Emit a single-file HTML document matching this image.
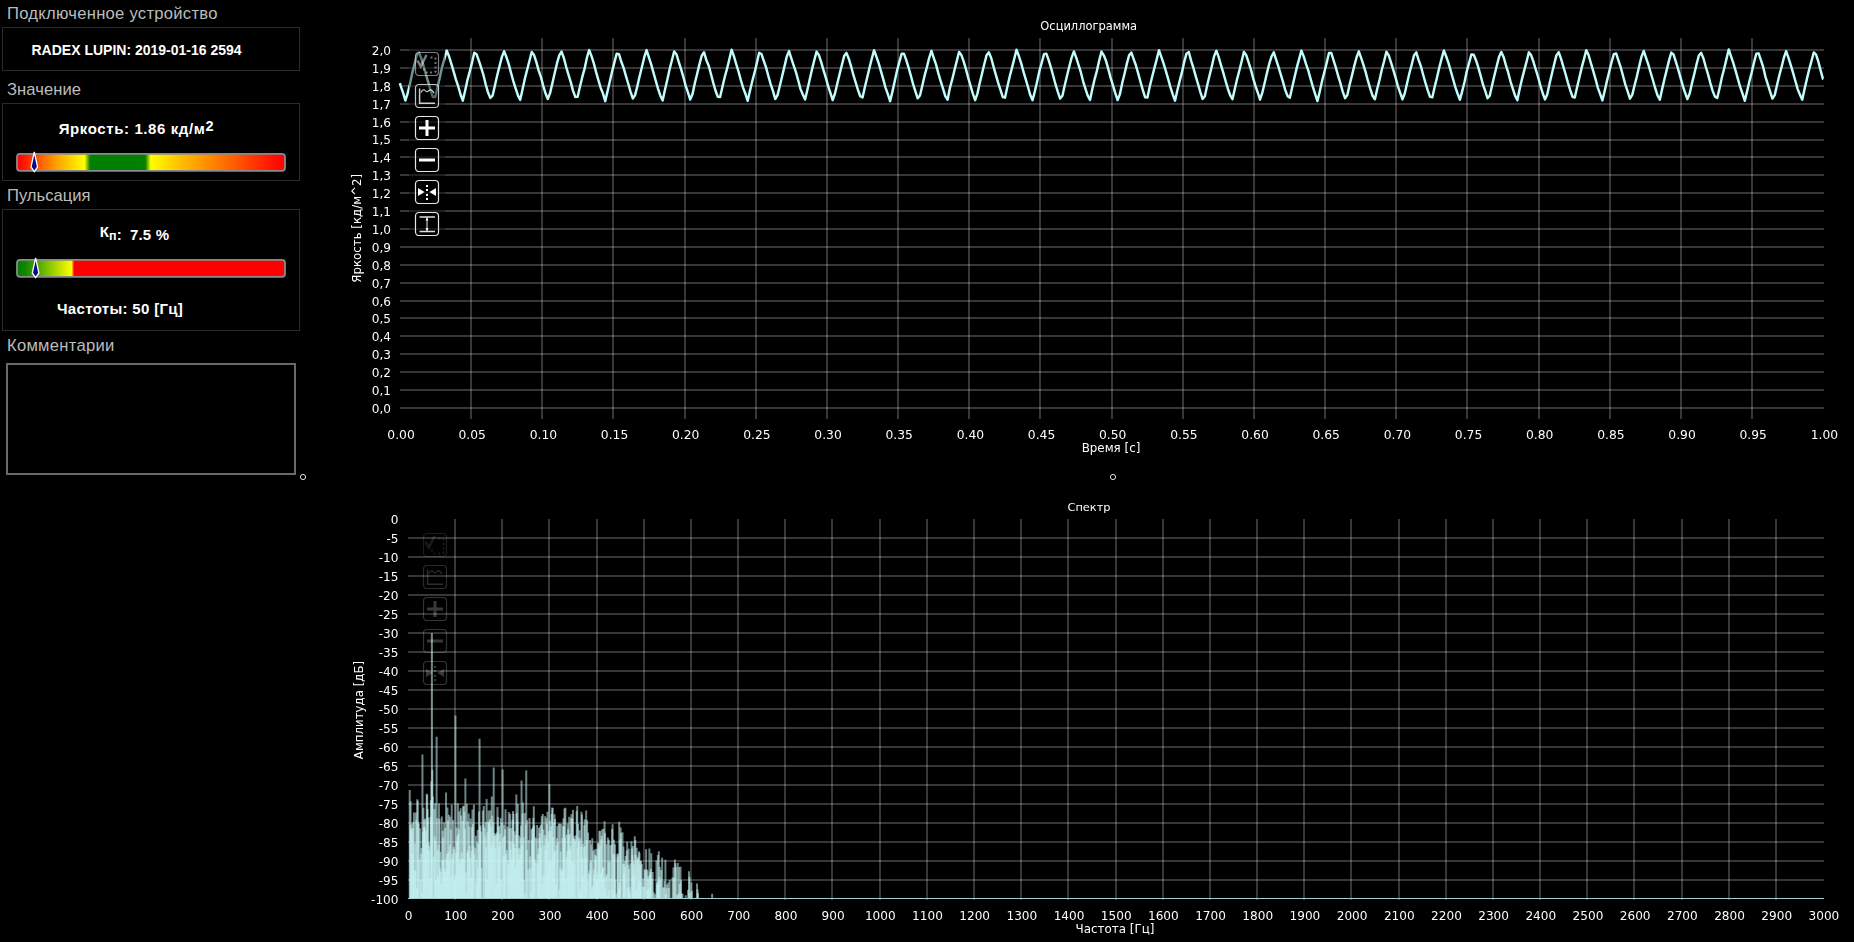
<!DOCTYPE html>
<html lang="ru"><head><meta charset="utf-8"><title>RADEX LUPIN</title><style>
html,body{margin:0;padding:0;background:#000;}
body{width:1854px;height:942px;overflow:hidden;position:relative;font-family:"Liberation Sans",sans-serif;color:#fff;}
.h{opacity:0.999;position:absolute;left:7px;color:#bcbcbc;font-size:16.6px;white-space:nowrap;line-height:20px;}
.box{position:absolute;left:2px;width:296px;border:1px solid #2b2b2b;box-sizing:content-box;}
.b{opacity:0.999;position:absolute;font-weight:bold;white-space:nowrap;color:#fff;line-height:20px;}
.ta{position:absolute;left:6px;top:363px;width:286px;height:108px;border:2px solid #6a6a6a;background:#000;}
</style></head>
<body>
<svg width="1854" height="942" viewBox="0 0 1854 942" style="position:absolute;left:0;top:0"><g fill="#fff" fill-opacity="0.215" shape-rendering="crispEdges"><rect x="400" y="407" width="1424" height="2"/><rect x="400" y="389" width="1424" height="2"/><rect x="400" y="371" width="1424" height="2"/><rect x="400" y="353" width="1424" height="2"/><rect x="400" y="335" width="1424" height="2"/><rect x="400" y="317" width="1424" height="2"/><rect x="400" y="300" width="1424" height="2"/><rect x="400" y="282" width="1424" height="2"/><rect x="400" y="264" width="1424" height="2"/><rect x="400" y="246" width="1424" height="2"/><rect x="400" y="228" width="1424" height="2"/><rect x="400" y="210" width="1424" height="2"/><rect x="400" y="192" width="1424" height="2"/><rect x="400" y="174" width="1424" height="2"/><rect x="400" y="156" width="1424" height="2"/><rect x="400" y="139" width="1424" height="2"/><rect x="400" y="121" width="1424" height="2"/><rect x="400" y="103" width="1424" height="2"/><rect x="400" y="85" width="1424" height="2"/><rect x="400" y="67" width="1424" height="2"/><rect x="400" y="49" width="1424" height="2"/><rect x="470" y="38" width="2" height="381"/><rect x="541" y="38" width="2" height="381"/><rect x="612" y="38" width="2" height="381"/><rect x="684" y="38" width="2" height="381"/><rect x="755" y="38" width="2" height="381"/><rect x="826" y="38" width="2" height="381"/><rect x="897" y="38" width="2" height="381"/><rect x="968" y="38" width="2" height="381"/><rect x="1039" y="38" width="2" height="381"/><rect x="1111" y="38" width="2" height="381"/><rect x="1182" y="38" width="2" height="381"/><rect x="1253" y="38" width="2" height="381"/><rect x="1324" y="38" width="2" height="381"/><rect x="1395" y="38" width="2" height="381"/><rect x="1466" y="38" width="2" height="381"/><rect x="1538" y="38" width="2" height="381"/><rect x="1609" y="38" width="2" height="381"/><rect x="1680" y="38" width="2" height="381"/><rect x="1751" y="38" width="2" height="381"/></g><path d="M399.83 83.09 L400.73 86.13 L403.03 92.59 L405.33 100.51 L407.62 93.36 L409.92 84.3 L412.22 73.15 L414.52 64.33 L416.81 54.94 L419.11 52.56 L421.41 58.8 L423.71 66.48 L426 74.71 L428.3 82.43 L430.6 90.64 L432.9 97.06 L435.19 97.04 L437.49 87.23 L439.79 77.64 L442.09 67.08 L444.38 59.04 L446.68 50.57 L448.98 56.18 L451.28 63.54 L453.58 71.29 L455.87 79.44 L458.17 86.23 L460.47 94.24 L462.77 100.68 L465.06 90.97 L467.36 80.43 L469.66 71.87 L471.96 62.9 L474.25 52.69 L476.55 54.27 L478.85 60.55 L481.15 67.62 L483.44 74.99 L485.74 84.5 L488.04 92.59 L490.34 97.9 L492.63 95.55 L494.93 85.44 L497.23 75.33 L499.53 66.14 L501.82 57.17 L504.12 51.24 L506.42 57.02 L508.72 64.14 L511.01 72.73 L513.31 81.1 L515.61 88.3 L517.91 95.38 L520.21 99.86 L522.5 89.46 L524.8 78.91 L527.1 69.95 L529.4 60.99 L531.69 51.95 L533.99 54.94 L536.29 61.83 L538.59 70.37 L540.88 76.87 L543.18 85.53 L545.48 93.29 L547.78 99.04 L550.07 93.15 L552.37 83.28 L554.67 73.18 L556.97 63.41 L559.26 55.3 L561.56 51.62 L563.86 58.01 L566.16 66.81 L568.45 74.61 L570.75 82.15 L573.05 90.85 L575.35 97.02 L577.65 96.78 L579.94 86.79 L582.24 77.19 L584.54 68.91 L586.84 58.01 L589.13 50.06 L591.43 55.91 L593.73 63.09 L596.03 71.88 L598.32 79.92 L600.62 87.68 L602.92 93.4 L605.22 101.13 L607.51 91.38 L609.81 81.44 L612.11 71.51 L614.41 62.4 L616.7 53.67 L619 54.18 L621.3 61.79 L623.6 67.84 L625.89 75.9 L628.19 83.52 L630.49 91.55 L632.79 98.47 L635.09 95.14 L637.38 85.96 L639.68 76.01 L641.98 66.69 L644.28 57.17 L646.57 50.12 L648.87 57.26 L651.17 64.3 L653.47 72.64 L655.76 80.77 L658.06 88.83 L660.36 95.72 L662.66 100.48 L664.95 89.79 L667.25 79.96 L669.55 69.53 L671.85 60.54 L674.14 51.54 L676.44 54.23 L678.74 61.97 L681.04 69.03 L683.33 76.78 L685.63 85.62 L687.93 92.41 L690.23 99.55 L692.52 94.01 L694.82 83.24 L697.12 74.01 L699.42 64.38 L701.72 55.75 L704.01 52.19 L706.31 59.94 L708.61 65.42 L710.91 73.77 L713.2 82.65 L715.5 90.49 L717.8 96.9 L720.1 97.05 L722.39 87.07 L724.69 77.27 L726.99 68.95 L729.29 59.57 L731.58 49.7 L733.88 56.14 L736.18 63.99 L738.48 71.51 L740.77 79.93 L743.07 87.6 L745.37 93.73 L747.67 100.85 L749.96 90.76 L752.26 81.24 L754.56 72.45 L756.86 62.92 L759.16 52.76 L761.45 53.97 L763.75 60.87 L766.05 67.36 L768.35 75.97 L770.64 84.07 L772.94 90.84 L775.24 99 L777.54 95.13 L779.83 85.75 L782.13 76.18 L784.43 66.61 L786.73 56.78 L789.02 51.12 L791.32 58.44 L793.62 65.32 L795.92 72.05 L798.21 80.43 L800.51 89.12 L802.81 94.48 L805.11 99.56 L807.4 89.8 L809.7 79.44 L812 69.48 L814.3 60.1 L816.6 51.58 L818.89 55.12 L821.19 62.09 L823.49 70.17 L825.79 77.69 L828.08 85.89 L830.38 92.78 L832.68 100.06 L834.98 93.53 L837.27 83.69 L839.57 74.2 L841.87 64.97 L844.17 56.01 L846.46 52.87 L848.76 58.72 L851.06 66.31 L853.36 74.98 L855.65 82.26 L857.95 89.95 L860.25 96.23 L862.55 97.44 L864.84 87.35 L867.14 77.77 L869.44 68.01 L871.74 58.84 L874.03 50.23 L876.33 56.37 L878.63 63.05 L880.93 71.07 L883.23 79.17 L885.52 87.57 L887.82 94.16 L890.12 101.21 L892.42 91.66 L894.71 81.25 L897.01 70.8 L899.31 62.17 L901.61 53.79 L903.9 53.7 L906.2 59.94 L908.5 67.28 L910.8 75.46 L913.09 84.16 L915.39 91.42 L917.69 98.35 L919.99 95.45 L922.28 85.66 L924.58 75.66 L926.88 67.22 L929.18 57.85 L931.47 50.86 L933.77 58.02 L936.07 64.57 L938.37 73.33 L940.67 81.07 L942.96 88.45 L945.26 96.06 L947.56 99.72 L949.86 88.12 L952.15 79.69 L954.45 70.23 L956.75 61.1 L959.05 52.03 L961.34 54.94 L963.64 61.38 L965.94 69.14 L968.24 77.84 L970.53 85.78 L972.83 93.54 L975.13 100.16 L977.43 93.63 L979.72 82.95 L982.02 73.59 L984.32 64.06 L986.62 55.11 L988.91 52.41 L991.21 58.02 L993.51 66.59 L995.81 74.66 L998.11 82.69 L1000.4 89.56 L1002.7 96.96 L1005 97.69 L1007.3 87.06 L1009.59 76.94 L1011.89 68.12 L1014.19 59.18 L1016.49 49.81 L1018.78 55.8 L1021.08 62.87 L1023.38 71.47 L1025.68 79.15 L1027.97 86.97 L1030.27 95.08 L1032.57 100.2 L1034.87 91.22 L1037.16 81.48 L1039.46 70.73 L1041.76 62.56 L1044.06 54.12 L1046.35 53.65 L1048.65 60.13 L1050.95 67.54 L1053.25 76.04 L1055.54 84.47 L1057.84 91.82 L1060.14 98.57 L1062.44 95.8 L1064.74 85.27 L1067.03 75.77 L1069.33 66.21 L1071.63 57.68 L1073.93 51.45 L1076.22 57.69 L1078.52 64.97 L1080.82 72.22 L1083.12 81.31 L1085.41 88.53 L1087.71 95.61 L1090.01 99.99 L1092.31 88.92 L1094.6 79.31 L1096.9 70.87 L1099.2 60.57 L1101.5 51.62 L1103.79 55.29 L1106.09 61.06 L1108.39 69.44 L1110.69 78.18 L1112.98 85.36 L1115.28 93.06 L1117.58 100.09 L1119.88 94.27 L1122.18 83.18 L1124.47 73.98 L1126.77 64.13 L1129.07 55.37 L1131.37 52.57 L1133.66 59.22 L1135.96 65.54 L1138.26 73.6 L1140.56 82.15 L1142.85 90.24 L1145.15 97.35 L1147.45 97.53 L1149.75 86.5 L1152.04 77.24 L1154.34 68.2 L1156.64 59.63 L1158.94 50.23 L1161.23 56.65 L1163.53 63.3 L1165.83 70.78 L1168.13 78.79 L1170.42 87.08 L1172.72 94.41 L1175.02 100.65 L1177.32 90.45 L1179.62 81.16 L1181.91 72.41 L1184.21 61.92 L1186.51 53.68 L1188.81 52.03 L1191.1 60.6 L1193.4 67.96 L1195.7 76.15 L1198 83.9 L1200.29 91.77 L1202.59 98.87 L1204.89 96.2 L1207.19 85.32 L1209.48 75.78 L1211.78 66.5 L1214.08 56.34 L1216.38 50.69 L1218.67 57.1 L1220.97 65.04 L1223.27 72.61 L1225.57 80.99 L1227.86 88.72 L1230.16 95.25 L1232.46 99.12 L1234.76 89.12 L1237.05 79.32 L1239.35 70.56 L1241.65 61.18 L1243.95 51.87 L1246.25 55.09 L1248.54 62.19 L1250.84 69.34 L1253.14 78.07 L1255.44 85.93 L1257.73 92.49 L1260.03 99.64 L1262.33 92.64 L1264.63 83.05 L1266.92 73.28 L1269.22 63.91 L1271.52 56.53 L1273.82 52.37 L1276.11 59.57 L1278.41 66.56 L1280.71 74.42 L1283.01 81.93 L1285.3 90.1 L1287.6 96.16 L1289.9 97.59 L1292.2 87.28 L1294.49 77.41 L1296.79 67.64 L1299.09 59.09 L1301.39 50.59 L1303.69 56.4 L1305.98 63.94 L1308.28 70.55 L1310.58 78.94 L1312.88 86.95 L1315.17 94.13 L1317.47 101.03 L1319.77 91.45 L1322.07 80.96 L1324.36 72.13 L1326.66 62.98 L1328.96 53.08 L1331.26 52.91 L1333.55 60.26 L1335.85 67.68 L1338.15 75.93 L1340.45 83.43 L1342.74 91.7 L1345.04 98.16 L1347.34 95.1 L1349.64 84.61 L1351.93 75.65 L1354.23 66.13 L1356.53 57.52 L1358.83 51.35 L1361.12 57.9 L1363.42 64.78 L1365.72 72.34 L1368.02 81.21 L1370.32 88.9 L1372.61 95.77 L1374.91 99.23 L1377.21 88.94 L1379.51 79.95 L1381.8 69.75 L1384.1 61.29 L1386.4 51.73 L1388.7 55.36 L1390.99 62.32 L1393.29 69.83 L1395.59 77.68 L1397.89 86.07 L1400.18 92.8 L1402.48 99.41 L1404.78 93.25 L1407.08 83.17 L1409.37 73.25 L1411.67 64.75 L1413.97 55.54 L1416.27 52.34 L1418.56 59.9 L1420.86 66.18 L1423.16 74.72 L1425.46 82.82 L1427.76 90.28 L1430.05 96.86 L1432.35 97.21 L1434.65 87.04 L1436.95 77.77 L1439.24 67.75 L1441.54 58.88 L1443.84 50.48 L1446.14 56.26 L1448.43 62.95 L1450.73 70.92 L1453.03 78.97 L1455.33 87.09 L1457.62 93.74 L1459.92 99.76 L1462.22 91.07 L1464.52 82.05 L1466.81 71 L1469.11 62.88 L1471.41 54.41 L1473.71 54.68 L1476 60.2 L1478.3 67.43 L1480.6 75.57 L1482.9 84.24 L1485.2 90.85 L1487.49 98.23 L1489.79 95.59 L1492.09 85.23 L1494.39 75.45 L1496.68 66.21 L1498.98 57.12 L1501.28 52.03 L1503.58 56.9 L1505.87 65.07 L1508.17 72.45 L1510.47 81.26 L1512.77 88.55 L1515.06 95.67 L1517.36 100.1 L1519.66 89.08 L1521.96 79.1 L1524.25 70.41 L1526.55 61.78 L1528.85 52.34 L1531.15 55.3 L1533.44 61.78 L1535.74 69.51 L1538.04 76.93 L1540.34 85.33 L1542.63 93.01 L1544.93 99.41 L1547.23 94.58 L1549.53 83.69 L1551.83 74.06 L1554.12 64.47 L1556.42 55.4 L1558.72 52.23 L1561.02 58.56 L1563.31 66.66 L1565.61 74.24 L1567.91 82.56 L1570.21 90.08 L1572.5 96.76 L1574.8 97.48 L1577.1 87.16 L1579.4 77.47 L1581.69 67.61 L1583.99 59.12 L1586.29 50.17 L1588.59 55.09 L1590.88 63.03 L1593.18 70.89 L1595.48 78.8 L1597.78 87.59 L1600.07 93.94 L1602.37 100.42 L1604.67 91.07 L1606.97 80.89 L1609.27 71.42 L1611.56 62.09 L1613.86 54.08 L1616.16 53.43 L1618.46 60.63 L1620.75 67.36 L1623.05 75.95 L1625.35 84.65 L1627.65 91.45 L1629.94 98.64 L1632.24 94.88 L1634.54 85.42 L1636.84 76.52 L1639.13 66.41 L1641.43 56.84 L1643.73 50.9 L1646.03 57.88 L1648.32 64.52 L1650.62 72.48 L1652.92 80.24 L1655.22 88.22 L1657.51 95.43 L1659.81 99.74 L1662.11 89.13 L1664.41 79.25 L1666.71 69.9 L1669 60.65 L1671.3 52.58 L1673.6 54.67 L1675.9 61.83 L1678.19 69.35 L1680.49 77.7 L1682.79 85.75 L1685.09 92.78 L1687.38 99.13 L1689.68 93.43 L1691.98 83.14 L1694.28 73.99 L1696.57 64.24 L1698.87 55.54 L1701.17 52.9 L1703.47 58.46 L1705.76 66.75 L1708.06 74.34 L1710.36 83.08 L1712.66 90.85 L1714.95 96.61 L1717.25 97.98 L1719.55 88.18 L1721.85 77.55 L1724.14 68.75 L1726.44 59.16 L1728.74 49.49 L1731.04 56.42 L1733.34 63.15 L1735.63 70.87 L1737.93 79.17 L1740.23 87.19 L1742.53 93.59 L1744.82 100.79 L1747.12 91.11 L1749.42 81.28 L1751.72 72.34 L1754.01 62.48 L1756.31 53.77 L1758.61 53.33 L1760.91 60.08 L1763.2 67.22 L1765.5 76.86 L1767.8 84.32 L1770.1 91.71 L1772.39 98.58 L1774.69 95.14 L1776.99 85.3 L1779.29 75.48 L1781.58 66.96 L1783.88 57.73 L1786.18 51.08 L1788.48 57.8 L1790.78 65.08 L1793.07 72.79 L1795.37 81.02 L1797.67 89.1 L1799.97 94.85 L1802.26 99.69 L1804.56 88.97 L1806.86 79.12 L1809.16 69.48 L1811.45 61.09 L1813.75 52.49 L1816.05 54.73 L1818.35 61.72 L1820.64 70.55 L1822.94 78.81 L1823.2 78.81" fill="none" stroke="#c2fdfd" stroke-width="2.45" stroke-linejoin="round"/><g opacity="1"><rect x="409" y="45" width="36" height="196" fill="#000" fill-opacity="0.42"/><g transform="translate(415,52)" opacity="0.55"><rect x="0.5" y="0.5" width="23" height="23" rx="3.5" ry="3.5" fill="#000" fill-opacity="0.35" stroke="#e6e6e6" stroke-width="1.2"/><path d="M2.5 8.5 L5.8 14.5 L11.5 3" fill="none" stroke="#ddd" stroke-width="2.5"/><g fill="#ccc"><rect x="15.5" y="4.5" width="2" height="2"/><rect x="19.5" y="5.5" width="2" height="2"/><rect x="19.5" y="10" width="2" height="2"/><rect x="19.5" y="14.5" width="2" height="2"/><path d="M18.7 18.7h3.6l-1.8 2.6z"/><rect x="15" y="19.5" width="2" height="2"/><rect x="10.5" y="19.5" width="2" height="2"/><rect x="8" y="16.5" width="2" height="2"/></g></g><g transform="translate(415,84)" opacity="0.85"><rect x="0.5" y="0.5" width="23" height="23" rx="3.5" ry="3.5" fill="#000" fill-opacity="0.35" stroke="#e6e6e6" stroke-width="1.2"/><path d="M4.6 4.5 V19.3 H20" fill="none" stroke="#eee" stroke-width="1.5"/><path d="M6 8.5 C7 6 9 5 10.2 6.5 S12 8 13.2 7 S15.5 5 17 6.5 S18.5 8.5 19 9.2" fill="none" stroke="#eee" stroke-width="1.2"/></g><g transform="translate(415,116)" opacity="1"><rect x="0.5" y="0.5" width="23" height="23" rx="3.5" ry="3.5" fill="#000" fill-opacity="0.35" stroke="#e6e6e6" stroke-width="1.2"/><path d="M4 12 H20 M12 4 V20" fill="none" stroke="#fff" stroke-width="3"/></g><g transform="translate(415,148)" opacity="1"><rect x="0.5" y="0.5" width="23" height="23" rx="3.5" ry="3.5" fill="#000" fill-opacity="0.35" stroke="#e6e6e6" stroke-width="1.2"/><path d="M4 12 H20" fill="none" stroke="#fff" stroke-width="3"/></g><g transform="translate(415,180)" opacity="1"><rect x="0.5" y="0.5" width="23" height="23" rx="3.5" ry="3.5" fill="#000" fill-opacity="0.35" stroke="#e6e6e6" stroke-width="1.2"/><path d="M3 8 L9.5 12 L3 16 Z M21 8 L14.5 12 L21 16 Z" fill="#fff"/><g fill="#fff"><rect x="11" y="5" width="2" height="2"/><rect x="11" y="9" width="2" height="2"/><rect x="11" y="14" width="2" height="2"/><rect x="11" y="18" width="2" height="2"/></g></g><g transform="translate(415,212)" opacity="1"><rect x="0.5" y="0.5" width="23" height="23" rx="3.5" ry="3.5" fill="#000" fill-opacity="0.35" stroke="#e6e6e6" stroke-width="1.2"/><path d="M4.5 5 H20 M4.5 19.5 H20" fill="none" stroke="#ddd" stroke-width="1.6"/><path d="M12 5 V19.5" fill="none" stroke="#eee" stroke-width="1"/><path d="M12 5.5 L10.5 8.5 H13.5 Z M12 19 L10.5 16 H13.5 Z" fill="#fff"/></g></g><g fill="#fff" fill-opacity="0.215" shape-rendering="crispEdges"><rect x="408" y="537" width="1416" height="2"/><rect x="408" y="556" width="1416" height="2"/><rect x="408" y="575" width="1416" height="2"/><rect x="408" y="594" width="1416" height="2"/><rect x="408" y="613" width="1416" height="2"/><rect x="408" y="632" width="1416" height="2"/><rect x="408" y="651" width="1416" height="2"/><rect x="408" y="670" width="1416" height="2"/><rect x="408" y="689" width="1416" height="2"/><rect x="408" y="708" width="1416" height="2"/><rect x="408" y="727" width="1416" height="2"/><rect x="408" y="746" width="1416" height="2"/><rect x="408" y="765" width="1416" height="2"/><rect x="408" y="784" width="1416" height="2"/><rect x="408" y="803" width="1416" height="2"/><rect x="408" y="822" width="1416" height="2"/><rect x="408" y="841" width="1416" height="2"/><rect x="408" y="860" width="1416" height="2"/><rect x="408" y="879" width="1416" height="2"/><rect x="454" y="519" width="2" height="381"/><rect x="501" y="519" width="2" height="381"/><rect x="548" y="519" width="2" height="381"/><rect x="596" y="519" width="2" height="381"/><rect x="643" y="519" width="2" height="381"/><rect x="690" y="519" width="2" height="381"/><rect x="737" y="519" width="2" height="381"/><rect x="784" y="519" width="2" height="381"/><rect x="831" y="519" width="2" height="381"/><rect x="879" y="519" width="2" height="381"/><rect x="926" y="519" width="2" height="381"/><rect x="973" y="519" width="2" height="381"/><rect x="1020" y="519" width="2" height="381"/><rect x="1067" y="519" width="2" height="381"/><rect x="1115" y="519" width="2" height="381"/><rect x="1162" y="519" width="2" height="381"/><rect x="1209" y="519" width="2" height="381"/><rect x="1256" y="519" width="2" height="381"/><rect x="1303" y="519" width="2" height="381"/><rect x="1350" y="519" width="2" height="381"/><rect x="1398" y="519" width="2" height="381"/><rect x="1445" y="519" width="2" height="381"/><rect x="1492" y="519" width="2" height="381"/><rect x="1539" y="519" width="2" height="381"/><rect x="1586" y="519" width="2" height="381"/><rect x="1633" y="519" width="2" height="381"/><rect x="1681" y="519" width="2" height="381"/><rect x="1728" y="519" width="2" height="381"/><rect x="1775" y="519" width="2" height="381"/></g><path d="M431.89 899V633" fill="none" stroke="#caf8f8" stroke-opacity="0.12" stroke-width="2"/><path d="M409.72 899V789.94M412.07 899V823.51M414.43 899V869.98M416.79 899V888.2M419.15 899V859.21M421.98 899V893.09M424.34 899V819.71M426.7 899V793.69M429.06 899V850.77M431.42 899V781.2M434.25 899V808.99M436.61 899V736.74M438.97 899V803.5M441.33 899V883.42M443.69 899V859.44M446.04 899V792.6M448.4 899V851.56M450.76 899V829.57M453.12 899V820.09M455.48 899V715.46M457.84 899V803.32M460.2 899V862.93M462.56 899V821M464.92 899V828.83M467.28 899V852.78M469.63 899V845.86M471.99 899V827.09M474.35 899V854.15M477.18 899V842.24M479.54 899V738.64M481.9 899V897.54M485.2 899V836.44M487.56 899V832.33M489.92 899V819.13M492.28 899V815.87M494.64 899V832.95M497 899V832.53M499.36 899V825.76M501.72 899V822.88M504.55 899V836.09M507.38 899V826.47M509.74 899V841.17M512.1 899V841.84M514.46 899V831.26M516.81 899V813.24M519.17 899V835.56M521.53 899V780.44M523.89 899V879.93M526.25 899V770.56M529.55 899V817.88M531.91 899V839.63M534.27 899V825.34M537.1 899V824.89M539.46 899V838.24M541.82 899V816.28M544.18 899V845.06M546.54 899V818.21M548.9 899V862.34M551.26 899V860.62M553.61 899V822.62M555.97 899V883.73M558.8 899V823.49M561.16 899V823.7M563.52 899V818.16M565.88 899V878.7M568.24 899V828.64M570.6 899V845.69M572.96 899V809.66M575.32 899V841.09M578.15 899V823.88M580.51 899V838.83M582.87 899V843.69M585.23 899V846.07M587.58 899V881.18M590.41 899V862.81M592.77 899V885.8M595.13 899V854.76M597.49 899V873.54M599.85 899V845.52M602.21 899V829.29M604.57 899V821.31M606.93 899V874.37M609.29 899V890.06M612.12 899V828.95M614.48 899V854.54M617.78 899V856.42M620.14 899V839.62M623.44 899V846.5M625.8 899V856.05M628.63 899V848.83M631.46 899V841.22M633.82 899V875.22M636.18 899V890.36M638.54 899V881.31M640.9 899V861.04M644.2 899V886.3M646.56 899V869.17M648.92 899V888.54M651.28 899V853.14M656.47 899V860.58M658.83 899V851.16M662.13 899V857.66M665.9 899V894.01M669.68 899V879.63M674.87 899V859.58M677.7 899V863.1M681 899V880.22M689.02 899V871.18M693.74 899V898.78M712.14 899V893.71" fill="none" stroke="#caf8f8" stroke-opacity="0.53" stroke-width="2"/><path d="M410.19 899V824.76M412.55 899V853.97M414.91 899V843.49M417.26 899V799.23M420.1 899V828.23M422.45 899V754.6M424.81 899V827.73M427.17 899V794.81M429.53 899V845.77M431.89 899V633M434.72 899V836.52M437.08 899V818.13M439.44 899V818.63M441.8 899V816.55M444.16 899V822.14M446.52 899V859.27M448.87 899V814.8M451.23 899V876.15M453.59 899V846.7M455.95 899V852.32M458.31 899V834M460.67 899V808.33M463.03 899V806.15M465.39 899V778.54M467.75 899V821.49M470.11 899V857.67M472.46 899V809.6M475.3 899V848.32M477.65 899V830.07M480.01 899V827.05M482.84 899V810.53M485.68 899V822.08M488.03 899V821.59M490.39 899V810.3M492.75 899V843.82M495.11 899V847.84M497.47 899V807.05M499.83 899V834.09M502.66 899V769.42M505.02 899V829.35M507.85 899V859.92M510.21 899V813.7M512.57 899V819.63M514.93 899V848M517.29 899V821.49M519.64 899V848.31M522 899V845.7M524.36 899V898.63M526.72 899V849.85M530.02 899V856.45M532.38 899V828.75M534.74 899V859.34M537.57 899V863.42M539.93 899V833.37M542.29 899V883.69M544.65 899V834.95M547.01 899V823.71M549.37 899V784.24M551.73 899V814.02M554.09 899V851.72M556.45 899V844.64M559.28 899V889.79M561.63 899V871.3M563.99 899V827.01M566.35 899V857.44M568.71 899V835.44M571.07 899V818.09M573.43 899V838.83M575.79 899V835.34M578.62 899V837.58M580.98 899V846.55M583.34 899V876.1M585.7 899V857.62M588.06 899V832.54M590.89 899V860.54M593.25 899V850.75M595.6 899V858.71M597.96 899V843.28M600.32 899V831.1M602.68 899V867.18M605.04 899V833.02M607.4 899V896.57M609.76 899V862.1M612.59 899V824.3M614.95 899V844.34M618.25 899V853.81M620.61 899V827.38M623.91 899V873.32M626.74 899V850.46M629.1 899V868.74M631.93 899V848.6M634.29 899V864.31M636.65 899V847.83M639.01 899V851.23M641.37 899V882.22M644.67 899V869.21M647.03 899V889.86M649.39 899V848.46M652.22 899V878.71M656.94 899V882.72M659.3 899V876.92M663.07 899V887.79M666.37 899V888.02M672.51 899V877.48M675.34 899V863.28M678.64 899V893.57M681.47 899V893.5M689.49 899V876.69M695.63 899V897.85" fill="none" stroke="#caf8f8" stroke-opacity="0.53" stroke-width="2"/><path d="M410.66 899V801.15M413.02 899V828.3M415.38 899V871.28M417.74 899V800.73M420.57 899V879.6M422.93 899V831.81M425.28 899V818.52M427.64 899V809.1M430 899V878.16M432.36 899V769.8M435.19 899V803.32M437.55 899V850.28M439.91 899V868.6M442.27 899V860.06M444.63 899V868.72M446.99 899V853.95M449.35 899V860.38M451.71 899V804.49M454.06 899V848.89M456.42 899V827.46M458.78 899V828.79M461.14 899V815.54M463.5 899V858.65M465.86 899V872.46M468.22 899V850.22M470.58 899V818.45M472.94 899V824.04M475.77 899V835.71M478.13 899V867.52M480.49 899V825.3M483.32 899V824.63M486.15 899V847.28M488.51 899V810.5M490.87 899V846.53M493.22 899V822.32M495.58 899V835.71M497.94 899V817.1M500.3 899V842.02M503.13 899V837.45M505.49 899V809.28M508.32 899V864.21M510.68 899V849.32M513.04 899V811.06M515.4 899V867.27M517.76 899V804.04M520.12 899V854.29M522.48 899V813.6M524.83 899V813.12M527.19 899V820.26M530.5 899V868.24M532.86 899V827.19M535.21 899V837.5M538.05 899V854.03M540.4 899V825.75M542.76 899V814.08M545.12 899V816.33M547.48 899V811.68M549.84 899V820.44M552.2 899V807.48M554.56 899V814.28M556.92 899V838.28M559.75 899V823.82M562.11 899V869.62M564.47 899V808.49M566.82 899V834.79M569.18 899V816.76M571.54 899V814.11M573.9 899V836.37M576.73 899V811.08M579.09 899V841.7M581.45 899V811.76M583.81 899V847.03M586.17 899V810.46M589 899V873.77M591.36 899V844.44M593.72 899V869.36M596.08 899V856.06M598.44 899V843.08M600.79 899V872.65M603.15 899V867.72M605.51 899V889.34M607.87 899V837.43M610.23 899V845.16M613.06 899V890.25M615.42 899V879.86M618.72 899V888.74M621.08 899V833.11M624.38 899V863.81M627.22 899V841.63M629.57 899V887.12M632.4 899V855.17M634.76 899V836.3M637.12 899V860.2M639.48 899V852.85M641.84 899V863.68M645.14 899V870.32M647.5 899V870.59M649.86 899V874.66M652.69 899V872.03M657.41 899V884.98M659.77 899V866.76M664.02 899V887.26M666.85 899V884.45M672.98 899V898.97M676.28 899V867.32M679.11 899V867.12M682.42 899V893.87M689.96 899V892.73M697.04 899V883.49" fill="none" stroke="#caf8f8" stroke-opacity="0.53" stroke-width="2"/><path d="M411.13 899V830.35M413.49 899V821.83M415.85 899V812.5M418.21 899V821.92M421.04 899V853.83M423.4 899V807.75M425.76 899V830.5M428.12 899V817.77M430.47 899V816.93M432.83 899V796.4M435.66 899V841.07M438.02 899V875.63M440.38 899V851.85M442.74 899V830.8M445.1 899V827.99M447.46 899V807.4M449.82 899V844.78M452.18 899V858.5M454.54 899V880.02M456.9 899V841.37M459.25 899V811.26M461.61 899V852.48M463.97 899V805.76M466.33 899V893.28M468.69 899V813.43M471.05 899V877.71M473.41 899V846.12M476.24 899V882.52M478.6 899V844.02M480.96 899V831.43M483.79 899V806M486.62 899V799.12M488.98 899V821.94M491.34 899V826.76M493.7 899V767.52M496.05 899V834.31M498.41 899V826.85M500.77 899V818.03M503.6 899V856.21M505.96 899V853.66M508.79 899V812.01M511.15 899V828.31M513.51 899V813.75M515.87 899V834.96M518.23 899V848.59M520.59 899V837.94M522.95 899V802.41M525.31 899V893.62M528.14 899V869.43M530.97 899V891.78M533.33 899V818.08M535.69 899V862.14M538.52 899V848.56M540.88 899V847.59M543.23 899V829.53M545.59 899V849.66M547.95 899V842.37M550.31 899V830.77M552.67 899V807.93M555.03 899V819.05M557.39 899V825.97M560.22 899V867.66M562.58 899V838.09M564.94 899V837.52M567.3 899V850.88M569.66 899V833.88M572.01 899V861.72M574.37 899V864.15M577.2 899V805.9M579.56 899V830.24M581.92 899V814.49M584.28 899V825.08M586.64 899V839.9M589.47 899V870.56M591.83 899V889.23M594.19 899V874.79M596.55 899V848.86M598.91 899V849.51M601.27 899V839.53M603.63 899V828.74M605.98 899V876.22M608.34 899V861.61M611.17 899V878.43M613.53 899V854.18M616.36 899V893.46M619.19 899V821.86M622.5 899V832.14M624.86 899V860.93M627.69 899V887.73M630.05 899V891.38M632.88 899V846.06M635.24 899V839.99M637.59 899V858.66M639.95 899V864.95M642.78 899V886.92M645.62 899V897.67M647.97 899V876.25M650.33 899V871.93M653.64 899V892.28M657.88 899V855.03M660.71 899V879.18M664.49 899V881.12M668.26 899V882.43M673.45 899V867.43M676.75 899V897.25M679.59 899V883.65M685.72 899V895.18M691.38 899V882.56M697.51 899V889.35" fill="none" stroke="#caf8f8" stroke-opacity="0.53" stroke-width="2"/><path d="M411.6 899V827.92M413.96 899V812.62M416.32 899V819.64M418.68 899V823.94M421.51 899V847.91M423.87 899V826.68M426.23 899V843.68M428.59 899V842.56M430.95 899V800.2M433.78 899V856.86M436.14 899V880.12M438.5 899V844.75M440.85 899V872.05M443.21 899V837.8M445.57 899V872.12M447.93 899V820.5M450.29 899V816.84M452.65 899V853.54M455.01 899V875.23M457.37 899V835.88M459.73 899V858.86M462.09 899V859.08M464.44 899V811.66M466.8 899V803.95M469.16 899V826.41M471.52 899V850.91M473.88 899V804.57M476.71 899V859.59M479.07 899V811.5M481.43 899V867.77M484.73 899V827.76M487.09 899V879.99M489.45 899V824.15M491.81 899V796.4M494.17 899V835.6M496.53 899V884.2M498.89 899V846.61M501.24 899V880.25M504.08 899V824.7M506.91 899V850.03M509.27 899V828.33M511.62 899V861.25M513.98 899V843.81M516.34 899V794.5M518.7 899V859.91M521.06 899V825.54M523.42 899V837.25M525.78 899V824.44M528.61 899V840.08M531.44 899V829.16M533.8 899V806.22M536.63 899V838.4M538.99 899V827.71M541.35 899V824.39M543.71 899V875.37M546.07 899V837.51M548.42 899V831.2M550.78 899V826.37M553.14 899V837.01M555.5 899V850.43M557.86 899V842.21M560.69 899V851.58M563.05 899V825.89M565.41 899V807.7M567.77 899V823.38M570.13 899V850.48M572.49 899V818.83M574.85 899V839M577.68 899V847.64M580.04 899V888.92M582.39 899V858.1M584.75 899V819.25M587.11 899V820.14M589.94 899V839.91M592.3 899V838.28M594.66 899V849.23M597.02 899V879.07M599.38 899V830.73M601.74 899V835.73M604.1 899V877.42M606.46 899V844.2M608.82 899V839.8M611.65 899V844.55M614 899V839.8M617.31 899V853.79M619.67 899V882.18M622.97 899V863.85M625.33 899V866.16M628.16 899V865.07M630.52 899V863.39M633.35 899V861.01M635.71 899V854.65M638.07 899V856.73M640.43 899V860.83M643.26 899V878.47M646.09 899V849.31M648.45 899V878.96M650.81 899V868.96M655.05 899V894.17M658.35 899V881.12M661.18 899V870.07M665.43 899V859.67M668.73 899V888.03M673.92 899V877.73M677.23 899V894.65M680.53 899V866.68M688.08 899V889.71M691.85 899V890.7M697.99 899V893.36" fill="none" stroke="#caf8f8" stroke-opacity="0.53" stroke-width="2"/><rect x="408" y="898" width="1415.5" height="1.2" fill="#a6d0d0" shape-rendering="crispEdges"/><g opacity="0.22"><g transform="translate(423,533)" opacity="0.55"><rect x="0.5" y="0.5" width="23" height="23" rx="3.5" ry="3.5" fill="#000" fill-opacity="0.35" stroke="#e6e6e6" stroke-width="1.2"/><path d="M2.5 8.5 L5.8 14.5 L11.5 3" fill="none" stroke="#ddd" stroke-width="2.5"/><g fill="#ccc"><rect x="15.5" y="4.5" width="2" height="2"/><rect x="19.5" y="5.5" width="2" height="2"/><rect x="19.5" y="10" width="2" height="2"/><rect x="19.5" y="14.5" width="2" height="2"/><path d="M18.7 18.7h3.6l-1.8 2.6z"/><rect x="15" y="19.5" width="2" height="2"/><rect x="10.5" y="19.5" width="2" height="2"/><rect x="8" y="16.5" width="2" height="2"/></g></g><g transform="translate(423,565)" opacity="0.85"><rect x="0.5" y="0.5" width="23" height="23" rx="3.5" ry="3.5" fill="#000" fill-opacity="0.35" stroke="#e6e6e6" stroke-width="1.2"/><path d="M4.6 4.5 V19.3 H20" fill="none" stroke="#eee" stroke-width="1.5"/><path d="M6 8.5 C7 6 9 5 10.2 6.5 S12 8 13.2 7 S15.5 5 17 6.5 S18.5 8.5 19 9.2" fill="none" stroke="#eee" stroke-width="1.2"/></g><g transform="translate(423,597)" opacity="1"><rect x="0.5" y="0.5" width="23" height="23" rx="3.5" ry="3.5" fill="#000" fill-opacity="0.35" stroke="#e6e6e6" stroke-width="1.2"/><path d="M4 12 H20 M12 4 V20" fill="none" stroke="#fff" stroke-width="3"/></g><g transform="translate(423,629)" opacity="1"><rect x="0.5" y="0.5" width="23" height="23" rx="3.5" ry="3.5" fill="#000" fill-opacity="0.35" stroke="#e6e6e6" stroke-width="1.2"/><path d="M4 12 H20" fill="none" stroke="#fff" stroke-width="3"/></g><g transform="translate(423,661)" opacity="1"><rect x="0.5" y="0.5" width="23" height="23" rx="3.5" ry="3.5" fill="#000" fill-opacity="0.35" stroke="#e6e6e6" stroke-width="1.2"/><path d="M3 8 L9.5 12 L3 16 Z M21 8 L14.5 12 L21 16 Z" fill="#fff"/><g fill="#fff"><rect x="11" y="5" width="2" height="2"/><rect x="11" y="9" width="2" height="2"/><rect x="11" y="14" width="2" height="2"/><rect x="11" y="18" width="2" height="2"/></g></g></g><g font-family="'DejaVu Sans', 'Liberation Sans', sans-serif" font-size="12.1" fill="#fff" opacity="0.999"><text x="1088.7" y="29.7" text-anchor="middle" font-size="11.45">Осциллограмма</text><text x="1089" y="510.8" text-anchor="middle" font-size="11.35">Спектр</text><text x="1111" y="452.1" text-anchor="middle" font-size="11.9">Время [с]</text><text x="1115" y="932.5" text-anchor="middle" font-size="11.9">Частота [Гц]</text><text transform="translate(361,228.3) rotate(-90)" text-anchor="middle" font-size="11.8">Яркость [кд/м^2]</text><text transform="translate(363,710) rotate(-90)" text-anchor="middle" font-size="11.8">Амплитуда [дБ]</text><text x="391" y="412.9" text-anchor="end">0,0</text><text x="391" y="395" text-anchor="end">0,1</text><text x="391" y="377.1" text-anchor="end">0,2</text><text x="391" y="359.2" text-anchor="end">0,3</text><text x="391" y="341.3" text-anchor="end">0,4</text><text x="391" y="323.4" text-anchor="end">0,5</text><text x="391" y="305.5" text-anchor="end">0,6</text><text x="391" y="287.6" text-anchor="end">0,7</text><text x="391" y="269.7" text-anchor="end">0,8</text><text x="391" y="251.8" text-anchor="end">0,9</text><text x="391" y="233.9" text-anchor="end">1,0</text><text x="391" y="216" text-anchor="end">1,1</text><text x="391" y="198.1" text-anchor="end">1,2</text><text x="391" y="180.2" text-anchor="end">1,3</text><text x="391" y="162.3" text-anchor="end">1,4</text><text x="391" y="144.4" text-anchor="end">1,5</text><text x="391" y="126.5" text-anchor="end">1,6</text><text x="391" y="108.6" text-anchor="end">1,7</text><text x="391" y="90.7" text-anchor="end">1,8</text><text x="391" y="72.8" text-anchor="end">1,9</text><text x="391" y="54.9" text-anchor="end">2,0</text><text x="401.03" y="438.8" text-anchor="middle" font-size="12.3">0.00</text><text x="472.2" y="438.8" text-anchor="middle" font-size="12.3">0.05</text><text x="543.37" y="438.8" text-anchor="middle" font-size="12.3">0.10</text><text x="614.54" y="438.8" text-anchor="middle" font-size="12.3">0.15</text><text x="685.7" y="438.8" text-anchor="middle" font-size="12.3">0.20</text><text x="756.87" y="438.8" text-anchor="middle" font-size="12.3">0.25</text><text x="828.04" y="438.8" text-anchor="middle" font-size="12.3">0.30</text><text x="899.21" y="438.8" text-anchor="middle" font-size="12.3">0.35</text><text x="970.38" y="438.8" text-anchor="middle" font-size="12.3">0.40</text><text x="1041.55" y="438.8" text-anchor="middle" font-size="12.3">0.45</text><text x="1112.72" y="438.8" text-anchor="middle" font-size="12.3">0.50</text><text x="1183.88" y="438.8" text-anchor="middle" font-size="12.3">0.55</text><text x="1255.05" y="438.8" text-anchor="middle" font-size="12.3">0.60</text><text x="1326.22" y="438.8" text-anchor="middle" font-size="12.3">0.65</text><text x="1397.39" y="438.8" text-anchor="middle" font-size="12.3">0.70</text><text x="1468.56" y="438.8" text-anchor="middle" font-size="12.3">0.75</text><text x="1539.73" y="438.8" text-anchor="middle" font-size="12.3">0.80</text><text x="1610.89" y="438.8" text-anchor="middle" font-size="12.3">0.85</text><text x="1682.06" y="438.8" text-anchor="middle" font-size="12.3">0.90</text><text x="1753.23" y="438.8" text-anchor="middle" font-size="12.3">0.95</text><text x="1824.4" y="438.8" text-anchor="middle" font-size="12.3">1.00</text><text x="398.5" y="523.6" text-anchor="end">0</text><text x="398.5" y="542.6" text-anchor="end">-5</text><text x="398.5" y="561.6" text-anchor="end">-10</text><text x="398.5" y="580.6" text-anchor="end">-15</text><text x="398.5" y="599.6" text-anchor="end">-20</text><text x="398.5" y="618.6" text-anchor="end">-25</text><text x="398.5" y="637.6" text-anchor="end">-30</text><text x="398.5" y="656.6" text-anchor="end">-35</text><text x="398.5" y="675.6" text-anchor="end">-40</text><text x="398.5" y="694.6" text-anchor="end">-45</text><text x="398.5" y="713.6" text-anchor="end">-50</text><text x="398.5" y="732.6" text-anchor="end">-55</text><text x="398.5" y="751.6" text-anchor="end">-60</text><text x="398.5" y="770.6" text-anchor="end">-65</text><text x="398.5" y="789.6" text-anchor="end">-70</text><text x="398.5" y="808.6" text-anchor="end">-75</text><text x="398.5" y="827.6" text-anchor="end">-80</text><text x="398.5" y="846.6" text-anchor="end">-85</text><text x="398.5" y="865.6" text-anchor="end">-90</text><text x="398.5" y="884.6" text-anchor="end">-95</text><text x="398.5" y="903.6" text-anchor="end">-100</text><text x="408.5" y="920.2" text-anchor="middle">0</text><text x="455.68" y="920.2" text-anchor="middle">100</text><text x="502.86" y="920.2" text-anchor="middle">200</text><text x="550.04" y="920.2" text-anchor="middle">300</text><text x="597.22" y="920.2" text-anchor="middle">400</text><text x="644.4" y="920.2" text-anchor="middle">500</text><text x="691.58" y="920.2" text-anchor="middle">600</text><text x="738.76" y="920.2" text-anchor="middle">700</text><text x="785.94" y="920.2" text-anchor="middle">800</text><text x="833.12" y="920.2" text-anchor="middle">900</text><text x="880.3" y="920.2" text-anchor="middle">1000</text><text x="927.48" y="920.2" text-anchor="middle">1100</text><text x="974.66" y="920.2" text-anchor="middle">1200</text><text x="1021.84" y="920.2" text-anchor="middle">1300</text><text x="1069.02" y="920.2" text-anchor="middle">1400</text><text x="1116.2" y="920.2" text-anchor="middle">1500</text><text x="1163.38" y="920.2" text-anchor="middle">1600</text><text x="1210.56" y="920.2" text-anchor="middle">1700</text><text x="1257.74" y="920.2" text-anchor="middle">1800</text><text x="1304.92" y="920.2" text-anchor="middle">1900</text><text x="1352.1" y="920.2" text-anchor="middle">2000</text><text x="1399.28" y="920.2" text-anchor="middle">2100</text><text x="1446.46" y="920.2" text-anchor="middle">2200</text><text x="1493.64" y="920.2" text-anchor="middle">2300</text><text x="1540.82" y="920.2" text-anchor="middle">2400</text><text x="1588" y="920.2" text-anchor="middle">2500</text><text x="1635.18" y="920.2" text-anchor="middle">2600</text><text x="1682.36" y="920.2" text-anchor="middle">2700</text><text x="1729.54" y="920.2" text-anchor="middle">2800</text><text x="1776.72" y="920.2" text-anchor="middle">2900</text><text x="1823.9" y="920.2" text-anchor="middle">3000</text></g><circle cx="1113" cy="477" r="2.6" fill="none" stroke="#ddd" stroke-width="1"/><circle cx="303" cy="477" r="2.6" fill="none" stroke="#ddd" stroke-width="1"/></svg>
<div class="h" style="top:4px;letter-spacing:0.27px">Подключенное устройство</div>
<div class="box" style="top:27px;height:42px"></div>
<div class="b" style="left:31.5px;top:40px;font-size:14px">RADEX LUPIN: 2019-01-16 2594</div>
<div class="h" style="top:80px;letter-spacing:0.05px">Значение</div>
<div class="box" style="top:103px;height:76px"></div>
<div class="b" style="left:58.7px;top:119px;font-size:15px;letter-spacing:0.6px">Яркость: 1.86 кд/м<span style="position:relative;top:-3px;font-size:14.5px;letter-spacing:0">2</span></div>
<svg style="position:absolute;left:10px;top:147px" width="284" height="32" viewBox="10 147 284 32"><defs><linearGradient id="g1" x1="0" y1="0" x2="1" y2="0"><stop offset="0%" stop-color="#ff0000"/><stop offset="2%" stop-color="#ff1000"/><stop offset="14%" stop-color="#ff9a00"/><stop offset="25.2%" stop-color="#ffff00"/><stop offset="27.2%" stop-color="#0c8200"/><stop offset="28%" stop-color="#008000"/><stop offset="47%" stop-color="#008000"/><stop offset="48%" stop-color="#108400"/><stop offset="49.9%" stop-color="#ffff00"/><stop offset="60%" stop-color="#ffc400"/><stop offset="75%" stop-color="#ff7a00"/><stop offset="95%" stop-color="#ff1500"/><stop offset="100%" stop-color="#ff0000"/></linearGradient></defs><rect x="17" y="153.9" width="268" height="17" rx="3.2" ry="3.2" fill="url(#g1)" stroke="#8a8a8a" stroke-width="1.8"/><path d="M34.3 151.8 L37.599999999999994 167 L34.3 171.6 L30.999999999999996 167 Z" fill="#0a0a86" stroke="#fff" stroke-width="1.3" stroke-linejoin="miter"/></svg>
<div class="h" style="top:186px">Пульсация</div>
<div class="box" style="top:209px;height:120px"></div>
<div class="b" style="left:99.7px;top:225px;font-size:15px;letter-spacing:0.2px"><span style="position:relative;top:-3px">К</span><span style="font-size:12.5px">п</span>: <span style="margin-left:3.5px">7.5 %</span></div>
<svg style="position:absolute;left:10px;top:253px" width="284" height="32" viewBox="10 253 284 32"><defs><linearGradient id="g2" x1="0" y1="0" x2="1" y2="0"><stop offset="0%" stop-color="#008000"/><stop offset="3%" stop-color="#0c8600"/><stop offset="12%" stop-color="#86c600"/><stop offset="20.4%" stop-color="#ffff00"/><stop offset="21.3%" stop-color="#ff0000"/><stop offset="100%" stop-color="#ff0000"/></linearGradient></defs><rect x="17" y="259.9" width="268" height="17" rx="3.2" ry="3.2" fill="url(#g2)" stroke="#8a8a8a" stroke-width="1.8"/><path d="M35.6 257.8 L38.9 273 L35.6 277.6 L32.300000000000004 273 Z" fill="#0a0a86" stroke="#fff" stroke-width="1.3" stroke-linejoin="miter"/></svg>
<div class="b" style="left:57px;top:298.6px;font-size:15px;letter-spacing:0.32px">Частоты: 50 [Гц]</div>
<div class="h" style="top:336px;letter-spacing:0.27px">Комментарии</div>
<div class="ta"></div>
</body></html>
